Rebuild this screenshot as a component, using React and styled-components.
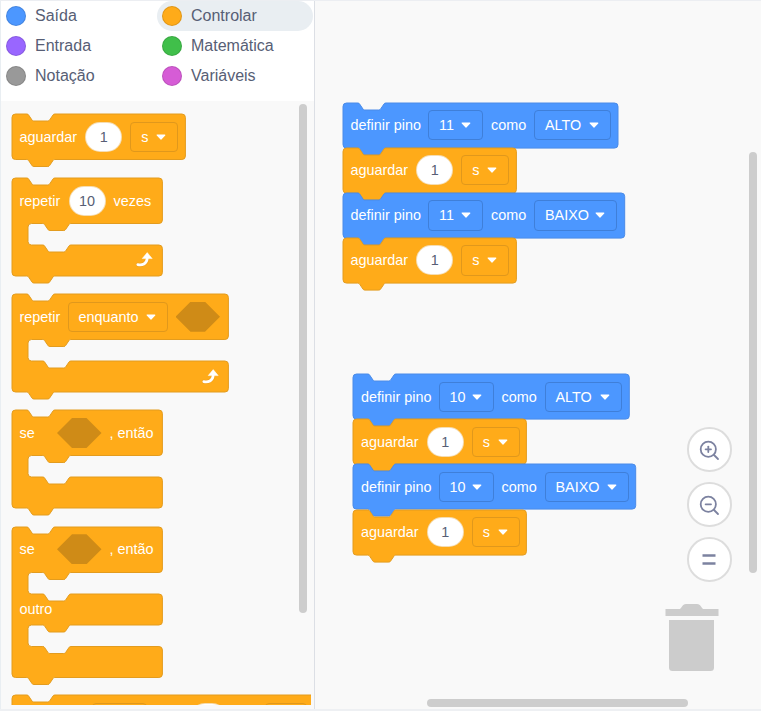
import React from 'react';
import styled, { createGlobalStyle } from 'styled-components';

const Global = createGlobalStyle`
  html, body { margin: 0; padding: 0; background: #fff; }
  * { box-sizing: border-box; }
`;

const TONES = {
  orange: { fill: '#ffab19', line: '#e39c1f', field: '#e0981c' },
  blue: { fill: '#4c97ff', line: '#4a8be8', field: '#3f7fd9' },
};

const Page = styled.div`
  display: flex;
  width: 761px;
  height: 711px;
  overflow: hidden;
  background: #f9f9f9;
  font-family: "Liberation Sans", Arial, sans-serif;
  border-top: 1px solid #eceef2;
  border-bottom: 2px solid #eef0f3;
`;
const Sidebar = styled.aside`
  flex: 0 0 315px;
  display: flex;
  flex-direction: column;
  border-left: 1px solid #e9eef2;
  border-right: 1px solid #dcdfe5;
`;
const Categories = styled.div`
  flex: 0 0 100px;
  display: grid;
  grid-template-columns: 156px 156px;
  grid-auto-rows: 30px;
  background: #fff;
`;
const Category = styled.div`
  display: flex;
  align-items: center;
  gap: 9px;
  padding-left: 5px;
  border-radius: 15px;
  background: ${p => (p.$active ? '#e9eef2' : 'transparent')};
  color: #575e75;
  font-size: 16px;
`;
const Dot = styled.span`
  width: 20px;
  height: 20px;
  border-radius: 50%;
  background: ${p => p.$color};
  border: 1px solid rgba(0, 0, 0, 0.12);
`;
const Palette = styled.div`
  position: relative;
  flex: 1;
  background: #f9f9f9;
  min-height: 0;
`;
const PaletteList = styled.div`
  display: flex;
  flex-direction: column;
  gap: 18.25px;
  width: 309.5px;
  height: 604px;
  padding: 13px 0 0 10.5px;
  overflow: hidden;
`;
const Thumb = styled.div`
  position: absolute;
  background: #cdcdcd;
  border-radius: 4px;
  ${p => p.$css}
`;
const Workspace = styled.main`
  position: relative;
  flex: 1;
  background: #f9f9f9;
`;
const Stack = styled.div`
  position: absolute;
  left: ${p => p.$x}px;
  top: ${p => p.$y}px;
  display: flex;
  flex-direction: column;
`;
const BlockBox = styled.div`
  position: relative;
  flex: none;
  width: ${p => p.$w}px;
  height: ${p => p.$h}px;
  color: #fff;
  font-size: 14.4px;
`;
const Outline = styled.svg`
  position: absolute;
  left: 0;
  top: 0;
  overflow: visible;
`;
const Row = styled.div`
  position: relative;
  display: flex;
  align-items: center;
  gap: 8px;
  height: ${p => p.$h || 45.5}px;
  padding: 0 ${p => (p.$right ? 9 : 8)}px 0 8px;
  justify-content: ${p => (p.$right ? 'flex-end' : 'flex-start')};
`;
const Mouth = styled.div`
  height: 21.5px;
`;
const Label = styled.span`
  flex: none;
  white-space: nowrap;
  ${p => p.$w && `width: ${p.$w}px;`}
`;
const Spacer = styled.span`
  flex: none;
  width: ${p => p.$w}px;
`;
const Pill = styled.span`
  flex: none;
  display: flex;
  align-items: center;
  justify-content: center;
  width: 37px;
  height: 30px;
  border-radius: 15px;
  background: #fff;
  color: #575e75;
  border: 1px solid ${p => TONES[p.$tone].field}55;
`;
const Field = styled.span`
  flex: none;
  display: flex;
  align-items: center;
  justify-content: space-between;
  width: ${p => p.$w}px;
  height: 30.5px;
  padding: 0 11px 0 10px;
  border-radius: 4px;
  background: ${p => TONES[p.$tone].fill};
  border: 1px solid ${p => TONES[p.$tone].field};
`;
const Hex = styled.span`
  flex: none;
  width: 44.5px;
  height: 30px;
  background: #cf8b17;
  clip-path: polygon(0 50%, 15px 0, calc(100% - 15px) 0, 100% 50%, calc(100% - 15px) 100%, 15px 100%);
`;
const Controls = styled.div`
  position: absolute;
  left: 372.2px;
  top: 426.3px;
  display: flex;
  flex-direction: column;
  gap: 10.5px;
`;
const RoundButton = styled.div`
  display: flex;
  align-items: center;
  justify-content: center;
  width: 44.5px;
  height: 44.5px;
  border-radius: 50%;
  background: #fff;
  border: 2px solid #ddd;
`;
const Trash = styled.svg`
  position: absolute;
  left: 350px;
  top: 601px;
`;

const DOWN = 'c1 0 1.4 .4 1.8 1 l3.4 5 c.4 .6 .8 1 1.8 1';
const UP = 'c1 0 1.4 -.4 1.8 -1 l3.4 -5 c.4 -.6 .8 -1 1.8 -1';
const TAB = 'c-1 0 -1.4 .4 -1.8 1 l-3.4 5 c-.4 .6 -.8 1 -1.8 1 h-14 c-1 0 -1.4 -.4 -1.8 -1 l-3.4 -5 c-.4 -.6 -.8 -1 -1.8 -1';
const R = 3.5;
const INNER = 16;

function blockPath(w, sections) {
  let d = `M0 ${R} a${R} ${R} 0 0 1 ${R} -${R} H14.8 ${DOWN} h14 ${UP} H${w - R} a${R} ${R} 0 0 1 ${R} ${R} `;
  let y = 0;
  for (let i = 0; i < sections.length - 1; i += 2) {
    const arm = y + sections[i];
    const foot = arm + sections[i + 1];
    d += `V${arm - R} a${R} ${R} 0 0 1 -${R} ${R} H${INNER + 42.8} ${TAB} H${INNER + R} `;
    d += `a${R} ${R} 0 0 0 -${R} ${R} V${foot - R} a${R} ${R} 0 0 0 ${R} ${R} H${INNER + 14.8} ${DOWN} h14 ${UP} `;
    d += `H${w - R} a${R} ${R} 0 0 1 ${R} ${R} `;
    y = foot;
  }
  const bottom = y + sections[sections.length - 1];
  d += `V${bottom - R} a${R} ${R} 0 0 1 -${R} ${R} H42.8 ${TAB} H${R} a${R} ${R} 0 0 1 -${R} -${R} Z`;
  return { d, bottom };
}

function Block({ tone = 'orange', w, sections = [45.5], children }) {
  const { d, bottom } = blockPath(w, sections);
  const t = TONES[tone];
  return (
    <BlockBox $w={w} $h={bottom}>
      <Outline width={w} height={bottom}>
        <path d={d} fill={t.fill} stroke={t.line} strokeWidth="1" />
      </Outline>
      {children}
    </BlockBox>
  );
}

const Caret = () => (
  <svg width="10" height="6" viewBox="0 0 10 6">
    <path d="M1.2 1h7.6L5 5z" fill="#fff" stroke="#fff" strokeWidth="1.2" strokeLinejoin="round" />
  </svg>
);

const Select = ({ tone = 'orange', w, children }) => (
  <Field $tone={tone} $w={w}>
    <span>{children}</span>
    <Caret />
  </Field>
);

const RepeatArrow = () => (
  <svg width="17" height="16" viewBox="0 0 17 16">
    <path d="M1.8 12.6c4.4 1 8.8-.8 9.4-6" fill="none" stroke="#d9901a" strokeWidth="3.8" strokeLinecap="round" opacity=".5" />
    <path d="M1.8 12.6c4.4 1 8.8-.8 9.4-6" fill="none" stroke="#fff" strokeWidth="2.8" strokeLinecap="round" />
    <path d="M6.2 6.6 11.2 .6l5 6z" fill="#fff" stroke="#fff" strokeWidth=".5" strokeLinejoin="round" />
  </svg>
);

const Wait = ({ h = 45.5 }) => (
  <Block w={173.4} sections={[h]}>
    <Row $h={h}>
      <Label $w={57.8}>aguardar</Label>
      <Pill $tone="orange">1</Pill>
      <Select w={48}>s</Select>
    </Row>
  </Block>
);

const SetPin = ({ pin, value, w, h }) => (
  <Block tone="blue" w={w} sections={[h]}>
    <Row $h={h}>
      <Label $w={69.5}>definir pino</Label>
      <Select tone="blue" w={55}>{pin}</Select>
      <Label $w={35}>como</Label>
      <Select tone="blue" w={w - 198.5}>{value}</Select>
    </Row>
  </Block>
);

const PITCH = 45.1;

const Program = ({ x, y, pin, low, high }) => (
  <Stack $x={x} $y={y}>
    <SetPin pin={pin} value="ALTO" w={high} h={PITCH} />
    <Wait h={PITCH} />
    <SetPin pin={pin} value="BAIXO" w={low} h={PITCH} />
    <Wait h={PITCH} />
  </Stack>
);

const CATEGORIES = [
  ['Saída', '#4c97ff'],
  ['Controlar', '#ffab19', true],
  ['Entrada', '#9966ff'],
  ['Matemática', '#40bf4a'],
  ['Notação', '#999999'],
  ['Variáveis', '#d65cd6'],
];

const ZoomIcon = ({ plus }) => (
  <svg width="24" height="24" viewBox="0 0 24 24" fill="none" stroke="#7c82a0" strokeWidth="1.8" strokeLinecap="round">
    <circle cx="11.3" cy="11.3" r="7.6" />
    <path d="M17 17l4 4" />
    <path d="M8.6 11.3h5.4" />
    {plus && <path d="M11.3 8.6v5.4" />}
  </svg>
);

export default function App() {
  return (
    <Page>
      <Global />
      <Sidebar>
        <Categories>
          {CATEGORIES.map(([name, color, active]) => (
            <Category key={name} $active={active}>
              <Dot $color={color} />
              {name}
            </Category>
          ))}
        </Categories>
        <Palette>
          <PaletteList>
            <Wait />
            <Block w={150.4} sections={[45.5, 21.5, 31]}>
              <Row>
                <Label $w={41}>repetir</Label>
                <Pill $tone="orange">10</Pill>
                <Label>vezes</Label>
              </Row>
              <Mouth />
              <Row $h={31} $right><RepeatArrow /></Row>
            </Block>
            <Block w={216.4} sections={[45.5, 21.5, 31]}>
              <Row>
                <Label $w={40}>repetir</Label>
                <Select w={100}>enquanto</Select>
                <Hex />
              </Row>
              <Mouth />
              <Row $h={31} $right><RepeatArrow /></Row>
            </Block>
            <Block w={150.4} sections={[45.5, 21.5, 31]}>
              <Row>
                <Label $w={29.5}>se</Label>
                <Hex />
                <Label>, então</Label>
              </Row>
            </Block>
            <Block w={150.4} sections={[45.5, 21.5, 31, 21.5, 31]}>
              <Row>
                <Label $w={29.5}>se</Label>
                <Hex />
                <Label>, então</Label>
              </Row>
              <Mouth />
              <Row $h={31}><Label>outro</Label></Row>
            </Block>
            <Block w={340} sections={[45.5]}>
              <Row>
                <Spacer $w={64.5} />
                <Field $tone="orange" $w={55} />
                <Spacer $w={27} />
                <Pill $tone="orange" />
                <Spacer $w={22} />
                <Field $tone="orange" $w={42} />
              </Row>
            </Block>
          </PaletteList>
          <Thumb $css="left: 298.3px; top: 3px; width: 8px; height: 509px;" />
        </Palette>
      </Sidebar>
      <Workspace>
        <Program x={27.5} y={101.6} pin="11" high={275} low={281.7} />
        <Program x={38} y={373.3} pin="10" high={276.3} low={282.7} />
        <Controls>
          <RoundButton><ZoomIcon plus /></RoundButton>
          <RoundButton><ZoomIcon /></RoundButton>
          <RoundButton>
            <svg width="14" height="12" viewBox="0 0 14 12">
              <path d="M.5 1.5h13M.5 9.5h13" stroke="#7c82a0" strokeWidth="2.4" fill="none" />
            </svg>
          </RoundButton>
        </Controls>
        <Trash width="54" height="70" viewBox="0 0 54 70">
          <path d="M.5 7h13.5c1.5 0 2-1.2 3-2.6C18 3 19 2 21 2h11c2 0 3 1 4 2.4 1 1.4 1.5 2.6 3 2.6h14.5v7H.5z" fill="#cccccc" />
          <path d="M4 18h45v47.5q0 3.5-3.5 3.5h-38Q4 69 4 65.5z" fill="#cccccc" />
        </Trash>
        <Thumb $css="left: 434.3px; top: 151px; width: 8px; height: 421px;" />
        <Thumb $css="left: 112px; top: 698px; width: 261px; height: 8px;" />
      </Workspace>
    </Page>
  );
}
